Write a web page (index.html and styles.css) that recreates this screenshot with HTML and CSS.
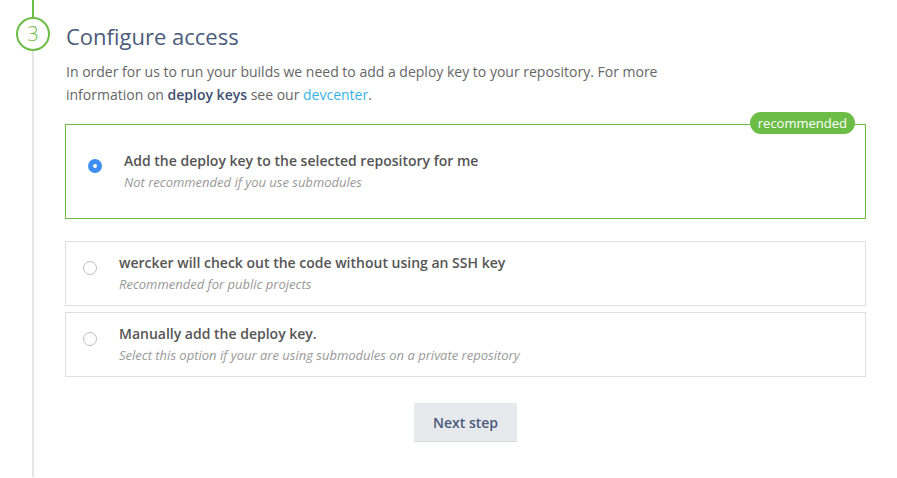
FILE: index.html
```html
<!DOCTYPE html>
<html>
<head>
<meta charset="utf-8">
<link rel="stylesheet" href="styles.css">
</head>
<body>
<div class="step">
  <div class="timeline">
    <div class="line-top"></div>
    <div class="step-num">3</div>
    <div class="line-bottom"></div>
  </div>
  <div class="content">
    <h2 class="title">Configure access</h2>
    <p class="intro">In order for us to run your builds we need to add a deploy key to your repository. For more information on <strong class="em">deploy keys</strong> see our <a class="link" href="#">devcenter</a>.</p>

    <div class="option option-recommended">
      <span class="badge">recommended</span>
      <span class="radio radio-checked"></span>
      <div class="option-text">
        <div class="option-title">Add the deploy key to the selected repository for me</div>
        <div class="option-sub">Not recommended if you use submodules</div>
      </div>
    </div>

    <div class="option-list">
      <div class="option">
        <span class="radio"></span>
        <div class="option-text">
          <div class="option-title">wercker will check out the code without using an SSH key</div>
          <div class="option-sub">Recommended for public projects</div>
        </div>
      </div>
      <div class="option">
        <span class="radio"></span>
        <div class="option-text">
          <div class="option-title">Manually add the deploy key.</div>
          <div class="option-sub">Select this option if your are using submodules on a private repository</div>
        </div>
      </div>
    </div>

    <div class="actions">
      <button class="btn">Next step</button>
    </div>
  </div>
</div>
</body>
</html>
```

FILE: styles.css
```css
* { box-sizing: border-box; }
html, body {
  margin: 0;
  padding: 0;
  background: #fff;
  font-family: "Open Sans", "Noto Sans", sans-serif;
  height: 100%;
}
.step {
  display: flex;
  height: 478px;
  width: 897px;
}
.timeline {
  width: 66px;
  flex: none;
  display: flex;
  flex-direction: column;
  align-items: center;
  padding-bottom: 1px;
}
.line-top {
  width: 2px;
  height: 17px;
  background: #6cbd45;
}
.step-num {
  width: 34px;
  height: 34px;
  border: 2px solid #6cbd45;
  border-radius: 50%;
  color: #6cbd45;
  font-size: 20px;
  font-weight: 300;
  display: flex;
  align-items: center;
  justify-content: center;
  line-height: 1;
}
.line-bottom {
  width: 2px;
  flex: 1;
  background: #e6e6e6;
}
.content {
  width: 801px;
  flex: none;
  margin-left: -1px;
}
.title {
  margin: 21px 0 0 1px;
  font-size: 22px;
  line-height: 30px;
  font-weight: 400;
  color: #4b5b7b;
}
.intro {
  margin: 9px 0 0 1px;
  max-width: 600px;
  font-size: 14px;
  line-height: 23px;
  color: #666;
}
.em {
  font-weight: 600;
  color: #3f4f70;
}
.link {
  color: #36b3e6;
  text-decoration: none;
}
.option {
  position: relative;
  display: flex;
  align-items: flex-start;
  border: 1px solid #dedede;
  padding: 10px 0 10px 17px;
}
.option.option-recommended {
  margin-top: 18px;
  border: 1px solid #6cbd45;
  padding: 25px 0 25px 22px;
}
.option-list {
  margin-top: 22px;
  display: flex;
  flex-direction: column;
  gap: 6px;
}
.badge {
  position: absolute;
  top: -13px;
  right: 10px;
  height: 22px;
  line-height: 22px;
  padding: 0 8px;
  border-radius: 11px;
  background: #6cbd45;
  color: #fff;
  font-size: 13px;
}
.radio {
  flex: none;
  width: 14px;
  height: 14px;
  margin-top: 9px;
  margin-right: 22px;
  border: 1px solid #bdbdbd;
  border-radius: 50%;
  background: #fff;
}
.radio.radio-checked {
  border: 5px solid #3d8ef0;
  background: #fff;
}
.option-title {
  font-size: 14px;
  line-height: 22px;
  font-weight: 600;
  color: #555;
}
.option-sub {
  font-size: 13px;
  line-height: 21px;
  font-style: italic;
  color: #999;
}
.actions {
  display: flex;
  justify-content: center;
  margin-top: 26px;
}
.btn {
  width: 103px;
  height: 39px;
  border: none;
  border-bottom: 1px solid #d6dadf;
  background: #e7eaed;
  color: #4b5b7b;
  font-family: "Open Sans", "Noto Sans", sans-serif;
  font-size: 14px;
  font-weight: 600;
  border-radius: 1px;
  padding: 0;
}
```
